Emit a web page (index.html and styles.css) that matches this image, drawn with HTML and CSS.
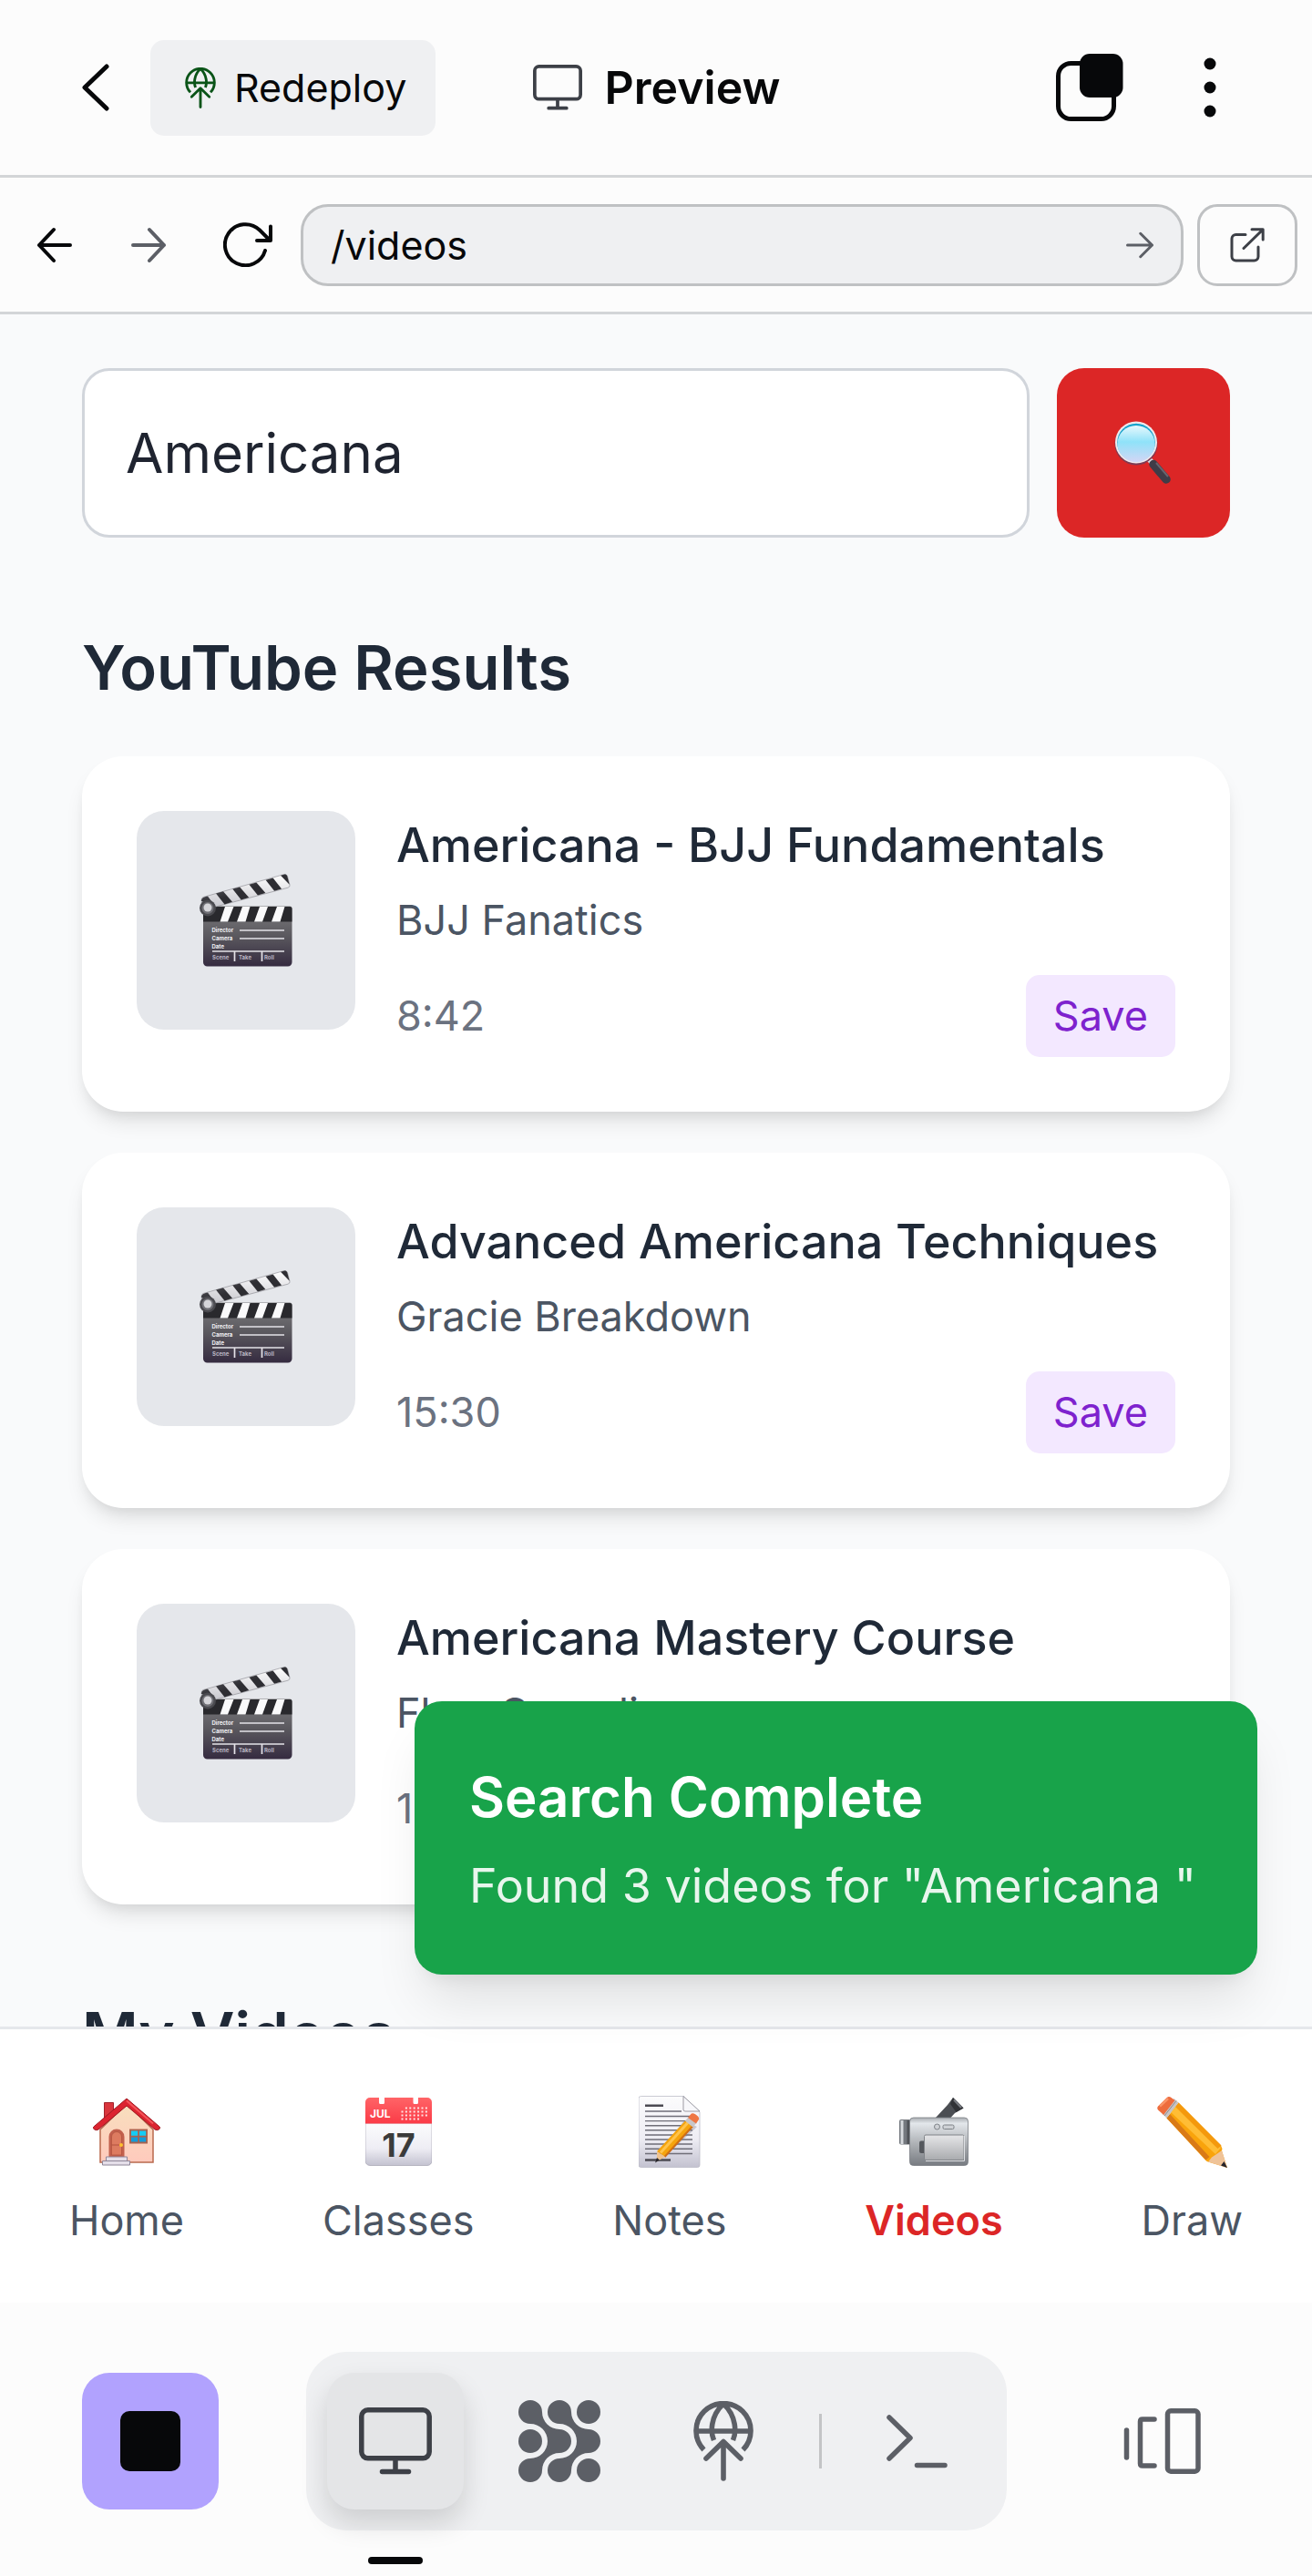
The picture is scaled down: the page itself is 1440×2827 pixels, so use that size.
FILE: index.html
```html
<!DOCTYPE html>
<html lang="en">
<head>
<meta charset="utf-8">
<meta name="viewport" content="width=device-width, initial-scale=1">
<title>Preview</title>
<link rel="stylesheet" href="styles.css">
</head>
<body>
<svg class="defs" aria-hidden="true">
  <defs>
    <linearGradient id="slate-grad" x1="0" y1="0" x2="0" y2="1"><stop offset="0" stop-color="#7c7c7e"/><stop offset=".5" stop-color="#5a585e"/><stop offset="1" stop-color="#352b40"/></linearGradient>
    <linearGradient id="dark-grad" x1="0" y1="0" x2="1" y2="1"><stop offset="0" stop-color="#77777d"/><stop offset=".5" stop-color="#2e2e33"/></linearGradient>
    <linearGradient id="light-grad" x1="0" y1="0" x2="0" y2="1"><stop offset="0" stop-color="#ffffff"/><stop offset="1" stop-color="#c9c9cf"/></linearGradient>
    <linearGradient id="lens-grad" x1="0" y1="0" x2="0" y2="1"><stop offset="0" stop-color="#e8f8fd"/><stop offset=".45" stop-color="#8fe2f9"/><stop offset="1" stop-color="#d3d6f5"/></linearGradient>
    <linearGradient id="wall-grad" x1="0" y1="0" x2="0" y2="1"><stop offset="0" stop-color="#f8dfbd"/><stop offset="1" stop-color="#ffcabd"/></linearGradient>
    <linearGradient id="red-grad" x1="0" y1="0" x2="0" y2="1"><stop offset="0" stop-color="#ff6467"/><stop offset="1" stop-color="#fb3b47"/></linearGradient>
    <linearGradient id="paper-grad" x1="0" y1="0" x2="0" y2="1"><stop offset="0" stop-color="#fcfcfd"/><stop offset=".6" stop-color="#eeedf4"/><stop offset="1" stop-color="#c3c2d0"/></linearGradient>
    <linearGradient id="metal-grad" x1="0" y1="0" x2="0" y2="1"><stop offset="0" stop-color="#a9adb2"/><stop offset=".12" stop-color="#e3e7eb"/><stop offset=".5" stop-color="#b3b6ba"/><stop offset="1" stop-color="#777b81"/></linearGradient>
    <linearGradient id="screen-grad" x1="0" y1="0" x2="0" y2="1"><stop offset="0" stop-color="#e6e6e8"/><stop offset="1" stop-color="#a9abae"/></linearGradient>
    <symbol id="monitor" viewBox="0 0 80 74"><g fill="none" stroke="currentColor" stroke-width="5.5" stroke-linecap="round"><rect x="2.8" y="2.8" width="74.4" height="53" rx="7"/><path d="M40 57v12M25.5 70.5h29"/></g></symbol>
    <symbol id="globe" viewBox="0 0 66 88"><g fill="none" stroke="currentColor" stroke-width="5.6"><path d="M11.5 53.500A30 30 0 1 1 54.500 53.500M3 33h60M33 3C18 17 19 35 22.500 43M33 3C48 17 47 35 43.500 43"/><path d="M33 45v40M14 63l19-18.500L52 63" stroke-linecap="round" stroke-linejoin="round"/></g></symbol>
    <symbol id="clapper" viewBox="0 0 102 102">
      <path d="M4 37a1.500 1.500 0 0 1 1.500-1.500H99a2.500 2.500 0 0 1 2.500 2.500v59a4.500 4.500 0 0 1-4.500 4.500H8.500A4.500 4.500 0 0 1 4 97z" fill="url(#slate-grad)"/>
      <path d="M4 36h95a2.500 2.500 0 0 1 2.500 2.500V52.500H4z" fill="#29292d"/>
      <path d="M28 36h9.500L31 52.500h-8.500zM47 36h8.500L50.500 52.500H41zM66 36h9L69 52.500h-9zM85 36h8.500L88.500 52.500H79z" fill="#fafafb"/>
      <path d="M4 25.500 93 .5q2.500-.5 3.500 2L99 12q.5 2.500-2 3.200L18 36 8 30 2 30q0-4 2-4.500z" fill="url(#light-grad)" stroke="#85858b" stroke-width=".6"/>
      <g fill="url(#dark-grad)"><path d="m18 21.500 8-2.200 10 11.500-8.500 2.600zM36.200 16.600l8-2.200 10 11.500-8.500 2.500zM54.400 11.700l8-2.200 10 11.500-8.500 2.500zM72.600 6.800l8-2.200 9.500 12-8 2.200zM89 1.800l4.500-1.200q2-.3 2.800 2l2.400 9.200zM2 30q-.5-4.500 7-5.500l8 11z"/></g>
      <circle cx="9" cy="37.500" r="9" fill="#4a4a4f"/><circle cx="9" cy="37.500" r="6.500" fill="#707076"/><circle cx="9" cy="37" r="4.500" fill="#d5d5d9"/>
      <path d="M44 62h49M44 71h49M14 85h79M38.500 85v11M68.500 85v11" stroke="#e4e2e8" stroke-width="1.700"/>
      <g class="slate-text"><text x="13.500" y="63.500">Director</text><text x="13.500" y="72.500">Camera</text><text x="13.500" y="81.500">Date</text></g>
      <g class="slate-text slate-text-dim"><text x="14" y="94">Scene</text><text x="43" y="94">Take</text><text x="71" y="94">Roll</text></g>
    </symbol>
  </defs>
</svg>

<header class="topbar">
  <div class="topbar-left">
    <button class="icon-btn" type="button" aria-label="Back"><svg width="30" height="52" viewBox="0 0 30 52"><path d="M27 3 3 26l24 23" fill="none" stroke="currentColor" stroke-width="5" stroke-linecap="round" stroke-linejoin="round"/></svg></button>
    <button class="redeploy" type="button"><svg class="redeploy-icon" width="34" height="45"><use href="#globe"/></svg>Redeploy</button>
  </div>
  <h1 class="topbar-title"><svg width="56" height="50"><use href="#monitor"/></svg>Preview</h1>
  <div class="topbar-right">
    <button class="icon-btn" type="button" aria-label="Windows"><svg width="74" height="74" viewBox="0 0 74 74"><rect x="2.500" y="10.500" width="61" height="61" rx="14" fill="none" stroke="currentColor" stroke-width="5"/><rect x="26" y="0" width="47.500" height="48" rx="11" fill="currentColor"/></svg></button>
    <button class="icon-btn more" type="button" aria-label="More"><svg width="14" height="66" viewBox="0 0 14 66"><g fill="currentColor"><circle cx="7" cy="7" r="6.500"/><circle cx="7" cy="33" r="6.500"/><circle cx="7" cy="59" r="6.500"/></g></svg></button>
  </div>
</header>

<form class="urlbar">
  <div class="url-nav">
    <button class="icon-btn" type="button" aria-label="Previous page"><svg width="40" height="40" viewBox="0 0 40 40"><path d="M37 20H3M19 3 3 20l16 17" fill="none" stroke="currentColor" stroke-width="4" stroke-linecap="round" stroke-linejoin="round"/></svg></button>
    <button class="icon-btn muted" type="button" aria-label="Next page"><svg width="40" height="40" viewBox="0 0 40 40"><path d="M3 20h34M21 3l16 17-16 17" fill="none" stroke="currentColor" stroke-width="4" stroke-linecap="round" stroke-linejoin="round"/></svg></button>
    <button class="icon-btn" type="button" aria-label="Reload"><svg width="54" height="49" viewBox="0 0 54 49"><path d="M46 31A22.500 22.500 0 1 1 40 8.500L51.500 20M52 4.500V20H37" fill="none" stroke="currentColor" stroke-width="4" stroke-linecap="round" stroke-linejoin="round"/></svg></button>
  </div>
  <div class="url-field">
    <input class="url-input" type="text" aria-label="Path" value="/videos">
    <button class="icon-btn muted" type="button" aria-label="Go"><svg width="30" height="30" viewBox="0 0 40 40"><path d="M2 20h36M21 3l17 17-17 17" fill="none" stroke="currentColor" stroke-width="4" stroke-linecap="round" stroke-linejoin="round"/></svg></button>
  </div>
  <button class="external" type="button" aria-label="Open in new tab"><svg width="38" height="38" viewBox="0 0 38 38"><path d="M17 7.500H6.500A4.500 4.500 0 0 0 2 12v19.500A4.500 4.500 0 0 0 6.500 36h20a4.500 4.500 0 0 0 4.500-4.500V21M15 22.500 36 2M24 1.800h12.200V13" fill="none" stroke="currentColor" stroke-width="3" stroke-linecap="round" stroke-linejoin="round"/></svg></button>
</form>

<div class="preview">
  <main class="page">
    <form class="search">
      <input class="search-input" type="text" aria-label="Search videos" value="Americana ">
      <button class="search-btn" type="button" aria-label="Search"><svg width="64" height="70" viewBox="0 0 64 70"><path d="m37 41 4 4" stroke="#d9d9de" stroke-width="6"/><path d="M43 47.500 57 64" stroke="#3f3c47" stroke-width="9.500" stroke-linecap="round"/><path d="m46 46 13 15" stroke="#68656f" stroke-width="2"/><circle cx="24" cy="25" r="23.500" fill="#7e3a52"/><circle cx="24" cy="23.500" r="23" fill="#efe9ec"/><circle cx="24" cy="23.500" r="20.800" fill="#17a3cc"/><ellipse cx="24" cy="25" rx="20.500" ry="20" fill="url(#lens-grad)"/></svg></button>
    </form>

    <h2 class="heading">YouTube Results</h2>
    <ul class="results">
      <li class="card">
        <div class="thumb"><svg width="102" height="102"><use href="#clapper"/></svg></div>
        <div class="info">
          <h3 class="title">Americana - BJJ Fundamentals</h3>
          <p class="channel">BJJ Fanatics</p>
          <div class="meta"><span class="time">8:42</span><button class="save" type="button">Save</button></div>
        </div>
      </li>
      <li class="card">
        <div class="thumb"><svg width="102" height="102"><use href="#clapper"/></svg></div>
        <div class="info">
          <h3 class="title">Advanced Americana Techniques</h3>
          <p class="channel">Gracie Breakdown</p>
          <div class="meta"><span class="time">15:30</span><button class="save" type="button">Save</button></div>
        </div>
      </li>
      <li class="card">
        <div class="thumb"><svg width="102" height="102"><use href="#clapper"/></svg></div>
        <div class="info">
          <h3 class="title">Americana Mastery Course</h3>
          <p class="channel">Flow Grappling</p>
          <div class="meta"><span class="time">12:15</span><button class="save" type="button">Save</button></div>
        </div>
      </li>
    </ul>
    <h2 class="heading">My Videos</h2>
  </main>

  <nav class="tabs">
    <a class="tab" href="#home"><span class="tab-icon"><svg width="74" height="74" viewBox="0 0 74 74"><path d="M12.500 4.500h10V20l-10 9z" fill="#d9363d" stroke="#a3222b" stroke-width="1"/><path d="M8 34 37 6l29 28v36H8z" fill="url(#wall-grad)" stroke="#b9694e" stroke-width="1.500"/><path d="M37 0 .8 31q-1 1.500.5 2.800 2.500 1.700 4.700.2L37 8l31 26q2.200 1.500 4.700-.2 1.500-1.300.5-2.800z" fill="#dc2430" stroke="#9f1a22" stroke-width="1"/><path d="m37 2.500 29 25" stroke="#f4555a" stroke-width="2"/><path d="M17.500 64V42a8.500 8.500 0 0 1 17 0v22z" fill="#c2604d"/><path d="M20.500 62V42a5.500 5.500 0 0 1 11 0v20z" fill="#dd7b60" stroke="#b3533f" stroke-width=".8"/><path d="M20.500 51h11" stroke="#b3533f"/><circle cx="31" cy="51" r="2" fill="#ffc22e"/><path d="M40 33.500h20v16H40z" fill="#a8624f"/><path d="M42 35.500h7.200v5.200H42zm9 0h7.200v5.200H51z" fill="#14ccf5"/><path d="M42 42.500h7.200v5H42zm9 0h7.200v5H51z" fill="#139bd8"/><path d="M14.500 64h23v4.500h-23zM10.500 68.500h30V73h-30z" fill="#e5dfe9" stroke="#8f8698" stroke-width="1"/></svg></span>Home</a>
    <a class="tab" href="#classes"><span class="tab-icon"><svg width="73" height="75" viewBox="0 0 73 75"><path d="M0 28h73v41.500a5 5 0 0 1-5 5H5a5 5 0 0 1-5-5z" fill="url(#paper-grad)" stroke="#9a99a8" stroke-width=".6"/><path d="M0 28.500V5a5 5 0 0 1 5-5h10v5.500q0 1.500 1.500 1.500h3q1.500 0 1.500-1.500V0h31.500v5.500q0 1.500 1.500 1.500h2.500q1.500 0 1.500-1.500V0H68a5 5 0 0 1 5 5v23.500z" fill="url(#red-grad)"/><text class="cal-month" x="5" y="21.500">JUL</text><text class="cal-day" x="36.500" y="64.500" text-anchor="middle">17</text><g stroke="#ffe3e3" stroke-width="2" stroke-dasharray="2 2.400" fill="none"><path d="M43.900 11.500h24M39.500 15.500h28.400M39.500 19.500h28.400M39.500 23.500h20"/></g></svg></span>Classes</a>
    <a class="tab" href="#notes"><span class="tab-icon"><svg width="68" height="79" viewBox="0 0 68 79"><path d="M2.500.5H49l18 17v58.500a2.500 2.500 0 0 1-2.500 2.500h-62A2.500 2.500 0 0 1 0 76V3A2.500 2.500 0 0 1 2.500.5z" fill="url(#paper-grad)" stroke="#bdbcc8" stroke-width=".8"/><path d="M49 .5v14.500q0 2 2 2h16z" fill="#f8f8fb" stroke="#85848e" stroke-width=".8"/><g stroke="#6f6e78" stroke-width="1.400"><path d="M7 17h40M7 22.500h52M7 27.600h52M7 32.700h52M7 37.800h52M7 43h52M7 48h52M7 53h52M7 58.200h52M7 63.500h52"/><path d="M7 10.800h20M7 70.500h28" stroke="#4b4a52" stroke-width="2.600"/></g><path d="m50 27 14 7-37 34-7 4 1-8z" fill="#77738055"/><path d="m51 27.500 8.500 6.500L29 67l-9-6z" fill="#f5a40d"/><path d="m54 29.500-30 33" stroke="#ffc44d" stroke-width="3"/><path d="m59.500 33-31 34" stroke="#d06e16" stroke-width="2"/><path d="m20 61 9 6-9 5z" fill="#eec391"/><path d="m20 68 3 2.500-5 3z" fill="#26242b"/><path d="m51 27.500 3.500-4 9 6.500-4 4.500z" fill="#c9c6c8"/><path d="m54 24 3-3.500q1.500-2.500 5.500 0 4.500 3 3.500 5.500l-3 4.500z" fill="#ef7643"/></svg></span>Notes</a>
    <a class="tab tab-active" href="#videos" aria-current="page"><span class="tab-icon"><svg width="76" height="75" viewBox="0 0 76 75"><path d="M39.500 22.500 53 8l6-8 11.500 11.500L61 17l-5 5.500z" fill="#4b4e53"/><path d="m59 0 11.500 11.500-8 4.500L56 7z" fill="#303236"/><path d="m60 2.500 8 8.500" stroke="#777a80" stroke-width="2"/><rect x="0" y="24" width="13" height="27.500" rx="2" fill="#74787e"/><path d="M3 25v26" stroke="#d7dade" stroke-width="3"/><path d="M10 25v26" stroke="#4f5257" stroke-width="3"/><rect x="11.500" y="22" width="64" height="52.500" rx="4" fill="url(#metal-grad)" stroke="#7a7e84" stroke-width=".8"/><rect x="22" y="47.500" width="8" height="13.500" rx="2" fill="#55585d"/><rect x="27.500" y="41" width="43.500" height="27.500" rx="1.500" fill="url(#screen-grad)" stroke="#818489" stroke-width="1"/><path d="M71.500 42v27.500H29" fill="none" stroke="#dddfe2" stroke-width="1"/><circle cx="41.500" cy="32" r="3" fill="#cfd2d6" stroke="#7e8287"/><rect x="48" y="30" width="12" height="4.500" rx="1.500" fill="#cfd2d6" stroke="#7e8287"/></svg></span>Videos</a>
    <a class="tab" href="#draw"><span class="tab-icon"><svg width="77" height="78" viewBox="0 0 77 78"><path d="M10.500 23.500 23.500 6.500 70 53.500q2 3 1 6L77 78 56 71.500q-2-.5-3-2z" fill="#f9a30b"/><path d="m20 10 50 46-6 7-50-47z" fill="#ffbd35"/><path d="m23.500 6.500 47 47-4 3.500L20 11z" fill="#f4990d"/><path d="m10.500 23.500 43 46 4-3.500-43.500-47z" fill="#d97a17"/><path d="M71 59 77 78l-21-6.500 4-5 4.500-3z" fill="#efc398"/><path d="m73.500 71 3.500 7-7-2.500z" fill="#26242b"/><path d="M10.500 23.500 23.500 6.500l-5-4.500L5.500 18.500z" fill="#c8c3c4"/><path d="M8 21 21 4.500" stroke="#908b8c" stroke-width="1"/><path d="M5.500 18.500 1 14.500q-1.500-2 0-4L11 .8Q13-.8 15.500 1l4 3-12.500 16z" fill="#ee6c3d"/><path d="M3 10.500 12 2" stroke="#fa9468" stroke-width="2.500"/></svg></span>Draw</a>
  </nav>

  <div class="toast" role="status">
    <p class="toast-title">Search Complete</p>
    <p class="toast-text">Found 3 videos for "Americana "</p>
  </div>
</div>

<footer class="dock">
  <button class="stop" type="button" aria-label="Stop"><span class="stop-square"></span></button>
  <div class="dock-pill">
    <button class="dock-btn dock-btn-active" type="button" aria-label="Preview"><svg width="80" height="74"><use href="#monitor"/></svg></button>
    <button class="dock-btn" type="button" aria-label="Agent"><svg width="90" height="90" viewBox="0 0 90 90"><g fill="currentColor"><path id="blob" d="M13 26A13 13 0 1 1 26 13A19 19 0 0 0 45 32A13 13 0 0 1 45 58A19 19 0 0 0 26 77A13 13 0 1 1 13 64A19 19 0 0 0 13 26z"/><use href="#blob" x="32"/><circle cx="77" cy="13" r="13"/><circle cx="13" cy="45" r="13"/><circle cx="77" cy="77" r="13"/></g></svg></button>
    <button class="dock-btn" type="button" aria-label="Deploy"><svg width="66" height="88"><use href="#globe"/></svg></button>
    <span class="divider"></span>
    <button class="dock-btn" type="button" aria-label="Shell"><svg width="67" height="59" viewBox="0 0 67 59"><path d="m3 3 23 22.500L3 48M33.500 55.500H64" fill="none" stroke="currentColor" stroke-width="5.500" stroke-linecap="round" stroke-linejoin="round"/></svg></button>
  </div>
  <button class="dock-btn" type="button" aria-label="Switch panes"><svg width="85" height="72" viewBox="0 0 85 72"><g fill="none" stroke="currentColor" stroke-width="5.500" stroke-linecap="round"><path d="M3.500 24v30M34 12H21q-2.500 0-2.500 2.500v46q0 2.500 2.500 2.500h13"/><rect x="48.500" y="2.800" width="33.500" height="66.400" rx="3.500"/></g></svg></button>
</footer>
</body>
</html>
```

FILE: styles.css
```css
* {
  box-sizing: border-box;
  margin: 0;
  padding: 0;
}

body {
  display: flex;
  flex-direction: column;
  height: 100vh;
  overflow: hidden;
  background: #fcfcfc;
  color: #07080a;
  font-family: Inter, "Liberation Sans", sans-serif;
  font-size: 43px;
  line-height: 60px;
}

button,
input {
  border: 0;
  background: none;
  color: inherit;
  font: inherit;
}

button {
  display: flex;
  align-items: center;
  justify-content: center;
}

ul {
  list-style: none;
}

svg {
  display: block;
  flex: none;
}

.defs {
  position: absolute;
  width: 0;
  height: 0;
}

.muted {
  color: #5c5f66;
}

/* Workspace header */
.topbar {
  display: grid;
  grid-template-columns: 1fr auto 1fr;
  align-items: center;
  flex: none;
  height: 195px;
  padding: 0 90px;
  border-bottom: 3px solid #d3d5d7;
}

.topbar-left,
.topbar-right {
  display: flex;
  align-items: center;
  gap: 45px;
}

.topbar-right {
  justify-content: flex-end;
  gap: 72px;
}

.more {
  width: 45px;
}

.redeploy {
  gap: 20px;
  height: 105px;
  padding: 0 32px 0 38px;
  border-radius: 15px;
  background: #eff0f2;
}

.redeploy-icon {
  color: #0a5418;
}

.topbar-title {
  display: flex;
  align-items: center;
  gap: 24px;
  font-size: 50px;
  font-weight: 600;
}

.topbar-title svg {
  color: #3d4047;
}

/* Address row */
.urlbar {
  display: flex;
  align-items: center;
  gap: 15px;
  flex: none;
  height: 150px;
  padding: 0 16px 0 40px;
  border-bottom: 3px solid #d3d5d7;
}

.url-nav {
  display: flex;
  align-items: center;
  justify-content: space-between;
  width: 259px;
  margin-right: 16px;
}

.url-field {
  display: flex;
  align-items: center;
  flex: 1;
  height: 90px;
  padding: 0 30px;
  border: 3px solid #bfc1c3;
  border-radius: 30px;
  background: #eff0f2;
}

.url-input {
  flex: 1;
  min-width: 0;
  outline: 0;
}

.external {
  width: 110px;
  height: 90px;
  border: 3px solid #bfc1c3;
  border-radius: 22px;
  color: #3d4047;
}

/* Previewed app */
.preview {
  position: relative;
  display: flex;
  flex-direction: column;
  flex: 1;
  min-height: 0;
  background: #f9fafb;
}

.page {
  flex: 1;
  min-height: 0;
  overflow: hidden;
  padding: 59px 90px 0;
}

.search {
  display: flex;
  gap: 30px;
  margin-bottom: 90px;
}

.search-input {
  flex: 1;
  min-width: 0;
  height: 186px;
  padding: 0 45px;
  border: 3px solid #d1d5db;
  border-radius: 30px;
  background: #fff;
  color: #1f2430;
  font-size: 60px;
  outline: 0;
}

.search-btn {
  width: 190px;
  border-radius: 30px;
  background: #dc2626;
}

.heading {
  margin-bottom: 45px;
  color: #1f2937;
  font-size: 67px;
  font-weight: 600;
  line-height: 105px;
}

.results {
  display: grid;
  gap: 45px;
  margin-bottom: 90px;
}

.card {
  display: flex;
  align-items: flex-start;
  gap: 45px;
  padding: 60px;
  border-radius: 45px;
  background: #fff;
  box-shadow: 0 15px 22px -4px rgba(0, 0, 0, 0.1), 0 8px 15px -8px rgba(0, 0, 0, 0.1);
}

.thumb {
  display: flex;
  align-items: center;
  justify-content: center;
  width: 240px;
  height: 240px;
  border-radius: 30px;
  background: #e5e7eb;
}

.slate-text {
  fill: #f1f0f3;
  font-size: 6px;
  font-weight: 700;
}

.slate-text-dim {
  fill: #b9b4c2;
}

.info {
  flex: 1;
}

.title {
  color: #1f2937;
  font-size: 52px;
  font-weight: 500;
  line-height: 75px;
}

.channel {
  margin: 15px 0 30px;
  color: #4b5563;
  font-size: 45px;
}

.meta {
  display: flex;
  align-items: center;
  justify-content: space-between;
  color: #6b7280;
  font-size: 45px;
}

.save {
  padding: 15px 30px;
  border-radius: 15px;
  background: #f3e8ff;
  color: #7e22ce;
}

.tabs {
  display: flex;
  justify-content: space-around;
  flex: none;
  padding: 60px 0;
  border-top: 3px solid #e5e7eb;
  background: #fff;
}

.tab {
  display: flex;
  flex-direction: column;
  align-items: center;
  gap: 15px;
  color: #4b5563;
  font-size: 45px;
  text-decoration: none;
}

.tab-active {
  color: #dc2626;
  font-weight: 600;
}

.tab-icon {
  display: flex;
  align-items: center;
  height: 105px;
}

.cal-month {
  fill: #fff;
  font-size: 12px;
  font-weight: 700;
}

.cal-day {
  fill: #3b3b3b;
  font-size: 36px;
  font-weight: 700;
}

/* Floats above the list, clear of the tab bar */
.toast {
  position: absolute;
  right: 60px;
  bottom: 360px;
  min-width: 925px;
  padding: 60px;
  border-radius: 30px;
  background: #18a34a;
  color: #fff;
  box-shadow: 0 38px 56px -11px rgba(0, 0, 0, 0.1), 0 15px 22px -15px rgba(0, 0, 0, 0.1);
}

.toast-title {
  margin-bottom: 15px;
  font-size: 60px;
  font-weight: 600;
  line-height: 90px;
}

.toast-text {
  font-size: 52px;
  line-height: 75px;
  opacity: 0.9;
}

/* Workspace dock */
.dock {
  display: flex;
  align-items: center;
  justify-content: space-between;
  flex: none;
  height: 300px;
  padding: 4px 90px 0;
}

.stop {
  width: 150px;
  height: 150px;
  border-radius: 30px;
  background: #b1a2fe;
}

.stop-square {
  width: 66px;
  height: 66px;
  border-radius: 10px;
  background: #07080a;
}

.dock-pill {
  display: flex;
  align-items: center;
  gap: 30px;
  padding: 23px;
  border-radius: 45px;
  background: #eff0f2;
}

.dock-btn {
  position: relative;
  width: 150px;
  height: 150px;
  border-radius: 30px;
  color: #5c5f66;
}

.dock-btn-active {
  background: #e4e5e7;
  color: #3d4047;
  box-shadow: 0 15px 30px rgba(0, 0, 0, 0.14);
}

.dock-btn-active::after {
  content: "";
  position: absolute;
  bottom: -60px;
  left: 45px;
  width: 60px;
  height: 8px;
  border-radius: 4px;
  background: #07080a;
}

.divider {
  width: 3px;
  height: 60px;
  background: #c3c4c6;
}
```
